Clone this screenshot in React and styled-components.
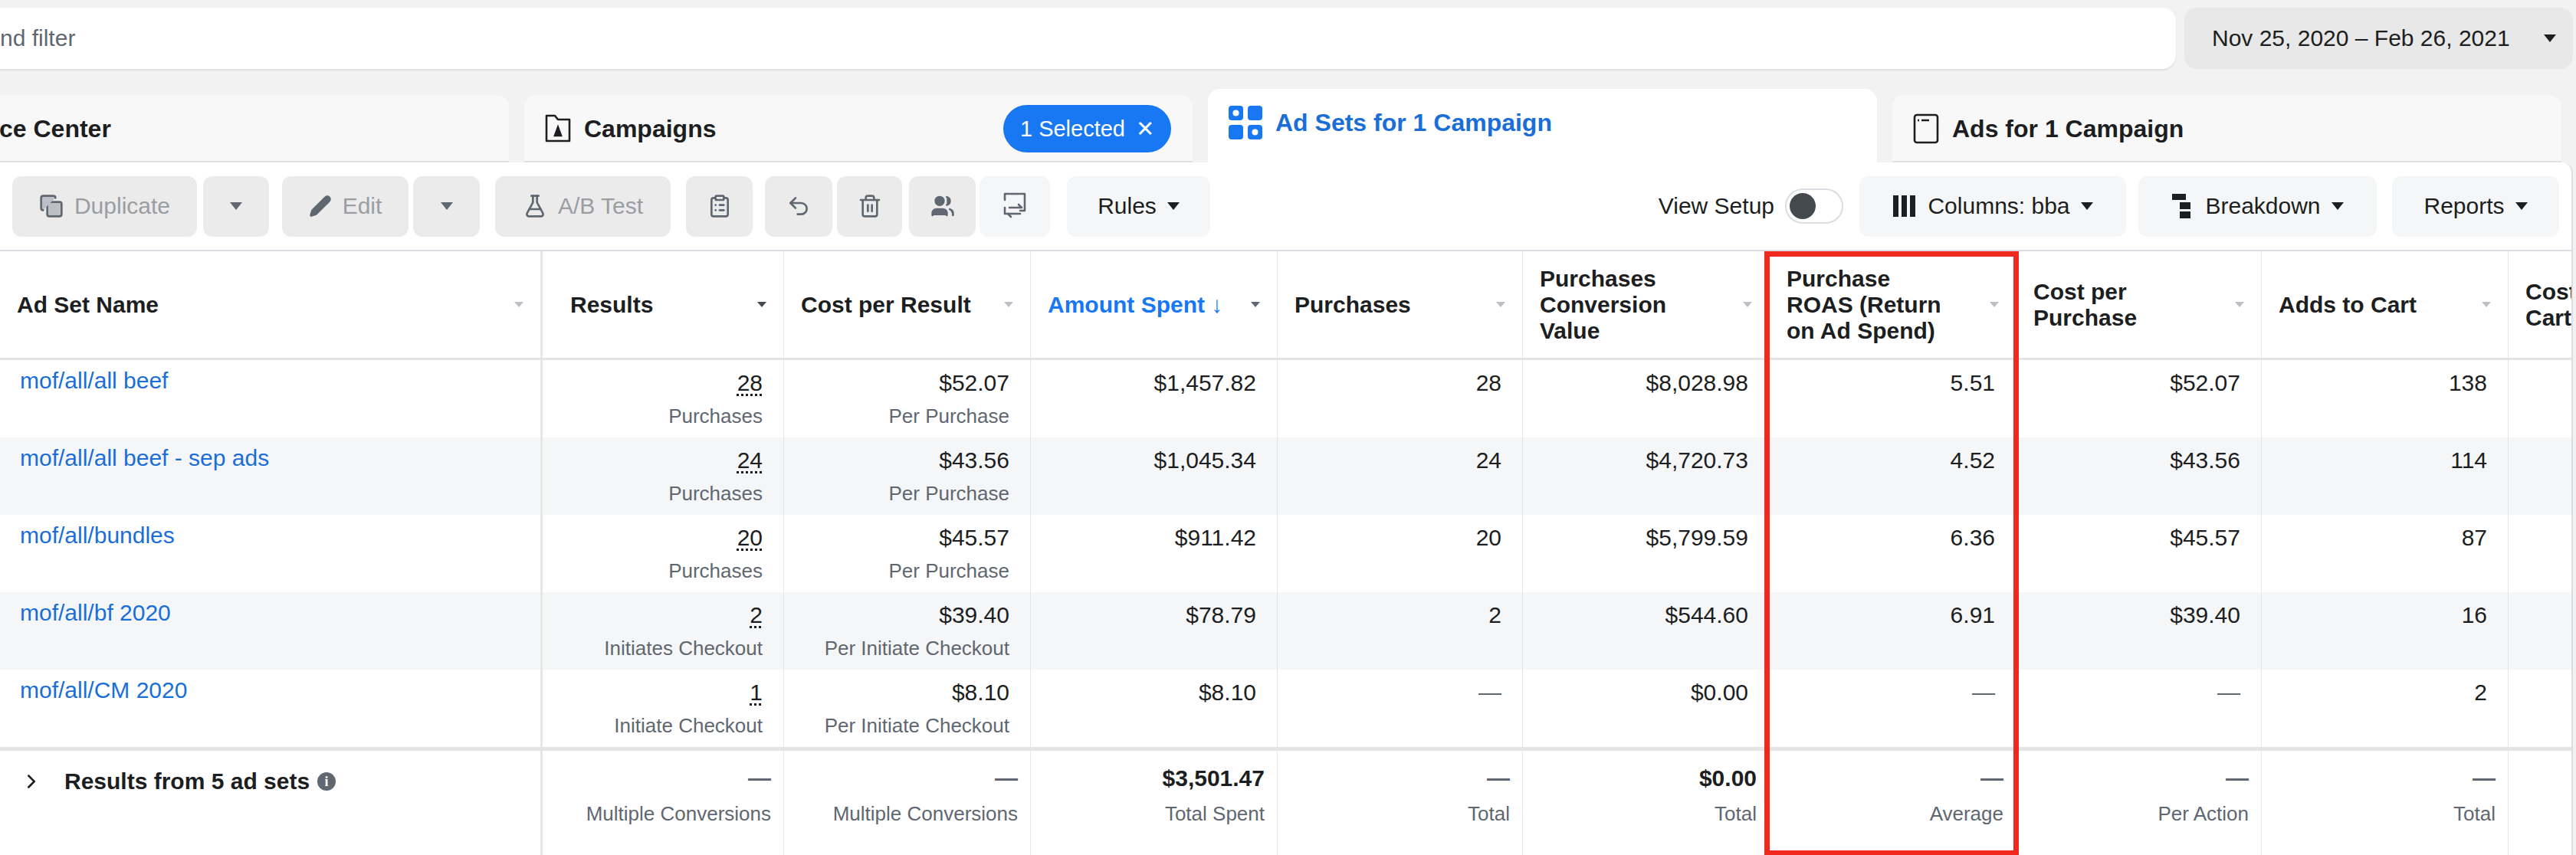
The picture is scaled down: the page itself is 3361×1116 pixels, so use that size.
import React from "react";
import styled, { createGlobalStyle } from "styled-components";
import { Copy, Pencil, FlaskConical, ClipboardList, Undo2, Trash2, Users, ChevronRight } from "lucide-react";

const Global = createGlobalStyle`
  html, body { margin: 0; padding: 0; background: #f2f2f2; }
  body { font-family: "Liberation Sans", Arial, sans-serif; color: #1c1e21; overflow: hidden; width: 3361px; height: 1116px; }
`;

const COLS = "705px 317px 322px 322px 320px 322px 322px 320px 322px 300px";

const Page = styled.div`
  width: 3361px;
  height: 1116px;
  overflow: hidden;
`;
const SearchRow = styled.div`
  display: flex;
  gap: 11px;
  padding-top: 10px;
  height: 80px;
`;
const Search = styled.div`
  width: 2839px;
  background: #fff;
  border-radius: 0 18px 18px 0;
  box-shadow: 0 2px 2px rgba(0,0,0,0.08);
  display: flex;
  align-items: center;
  font-size: 30px;
  color: #606770;
`;
const DateBtn = styled.div`
  width: 507px;
  background: #e8e8e8;
  border-radius: 16px;
  display: flex;
  align-items: center;
  justify-content: space-between;
  padding: 0 22px 0 36px;
  box-sizing: border-box;
  font-size: 30px;
  color: #1c1e21;
`;
const Caret = styled.span`
  display: inline-block;
  flex: none;
  width: 0; height: 0;
  border-left: ${p => p.$s || 8}px solid transparent;
  border-right: ${p => p.$s || 8}px solid transparent;
  border-top: ${p => (p.$s || 8) * 1.3}px solid ${p => p.$c || "#1c1e21"};
`;
const Tabs = styled.div`
  display: flex;
  align-items: flex-end;
  gap: 20px;
  margin-top: 26px;
  height: 96px;
`;
const Tab = styled.div`
  width: ${p => p.$w}px;
  height: ${p => (p.$active ? 96 : 88)}px;
  background: ${p => (p.$active ? "#fff" : "#f8f8f8")};
  border-radius: ${p => (p.$first ? "0 16px 0 0" : "16px 16px 0 0")};
  box-shadow: ${p => (p.$active ? "none" : "inset 0 -2px 0 #e0e0e0")};
  display: flex;
  align-items: center;
  gap: 16px;
  padding: ${p => (p.$first ? "0" : "0 28px 0 26px")};
  padding-bottom: ${p => (p.$active ? "8px" : "0")};
  box-sizing: border-box;
  font-size: 32px;
  font-weight: 700;
  color: ${p => (p.$active ? "#1a6ed8" : "#1c1e21")};
  margin-left: ${p => (p.$first ? "-1px" : "0")};
`;
const Badge = styled.div`
  margin-left: auto;
  background: #1877f2;
  color: #fff;
  font-weight: 400;
  font-size: 29px;
  height: 62px;
  padding: 0 22px;
  border-radius: 31px;
  display: flex;
  align-items: center;
  gap: 14px;
`;
const Panel = styled.div`
  background: #fff;
  width: 3357px;
  border-right: 2px solid #dadde1;
  border-radius: 0 14px 0 0;
  box-sizing: border-box;
`;
const Toolbar = styled.div`
  display: flex;
  align-items: center;
  height: 114px;
  padding: 0 16px;
  box-sizing: border-box;
`;
const Btn = styled.div`
  height: 79px;
  padding: 0 ${p => p.$px ?? 24}px;
  min-width: ${p => p.$mw || 0}px;
  box-sizing: border-box;
  background: ${p => (p.$light ? "#f5f6f7" : "#ebebeb")};
  color: ${p => (p.$dis ? "#9a9da2" : "#1c1e21")};
  border-radius: 12px;
  display: flex;
  align-items: center;
  justify-content: center;
  gap: 14px;
  font-size: 30px;
  margin-left: ${p => p.$ml || 0}px;
`;
const Spacer = styled.div` flex: 1; `;
const ViewSetup = styled.div`
  display: flex;
  align-items: center;
  gap: 14px;
  font-size: 30px;
  margin-right: 21px;
`;
const Toggle = styled.div`
  width: 76px; height: 46px;
  border: 2px solid #dadde1;
  border-radius: 23px;
  box-sizing: border-box;
  position: relative;
  &::after {
    content: ""; position: absolute; left: 4px; top: 4px;
    width: 34px; height: 34px; border-radius: 50%; background: #444950;
  }
`;
const TableWrap = styled.div`
  position: relative;
  border-top: 2px solid #dadde1;
  overflow: hidden;
`;
const Grid = styled.div`
  display: grid;
  grid-template-columns: ${COLS};
  grid-template-rows: ${p => p.$h}px;
  height: ${p => p.$h}px;
  background: ${p => p.$bg || "#fff"};
  border-bottom: ${p => p.$bb || 0}px solid #e4e4e4;
  border-top: ${p => p.$bt || 0}px solid #e4e4e4;
`;
const HeadCell = styled.div`
  display: flex;
  align-items: center;
  gap: 8px;
  padding: 0 22px 0 ${p => p.$pl || 22}px;
  border-left: ${p => (p.$shadow ? "3px solid #e6e6e6" : "1px solid #e6e6e6")};
  font-size: 30px;
  font-weight: 700;
  line-height: 34px;
  color: ${p => (p.$active ? "#1877f2" : "#1c1e21")};
  &:first-child { border-left: 0; }
`;
const HeadText = styled.div`
  flex: 1;
  white-space: pre;
`;
const Cell = styled.div`
  border-left: ${p => (p.$shadow ? "3px solid #e6e6e6" : "1px solid #e6e6e6")};
  padding: ${p => p.$pt ?? 13}px ${p => p.$pr ?? 27}px 0 22px;
  text-align: right;
  &:first-child { border-left: 0; text-align: left; }
`;
const Value = styled.div`
  font-size: 30px;
  line-height: 34px;
  font-weight: ${p => (p.$bold ? 700 : 400)};
  color: ${p => (p.$dash ? "#606770" : "#1c1e21")};
  & > u { text-decoration: underline dotted; text-underline-offset: 4px; }
`;
const Sub = styled.div`
  font-size: 26px;
  line-height: 30px;
  color: #606770;
  margin-top: ${p => p.$mt ?? 11}px;
`;
const Link = styled.div`
  font-size: 30px;
  line-height: 34px;
  color: #1a6ed8;
  padding-left: 4px;
`;
const SumName = styled.div`
  display: flex;
  align-items: center;
  gap: 10px;
  font-size: 30px;
  font-weight: 700;
  line-height: 34px;
  padding-top: 7px;
`;
const Info = styled.span`
  width: 24px; height: 24px; border-radius: 50%;
  background: #606770; color: #fff;
  font-size: 18px; font-weight: 700;
  display: inline-flex; align-items: center; justify-content: center;
  font-family: "Liberation Serif", serif;
`;
const Highlight = styled.div`
  position: absolute;
  left: 2302px;
  top: 0;
  width: 332px;
  height: 789px;
  border: 7px solid #f0281e;
  box-sizing: border-box;
  pointer-events: none;
`;

const AdSetIcon = () => (
  <svg width="46" height="46" viewBox="0 0 46 46">
    <rect x="1" y="1" width="19" height="19" rx="4" fill="#1877f2" />
    <rect x="26" y="1" width="19" height="19" rx="4" fill="#1877f2" />
    <rect x="1" y="26" width="19" height="19" rx="4" fill="#1877f2" />
    <rect x="26" y="26" width="19" height="19" rx="4" fill="#1877f2" />
    <circle cx="10.5" cy="10.5" r="4" fill="#fff" />
    <circle cx="35.5" cy="35.5" r="4" fill="#fff" />
  </svg>
);
const FolderIcon = () => (
  <svg width="36" height="42" viewBox="0 0 36 42" fill="none" stroke="#1c1e21" strokeWidth="2.6">
    <path d="M3 4h11l4 5h15v28H3z" strokeLinejoin="round" />
    <path d="M14 30l4-11 4 11z" fill="#1c1e21" />
  </svg>
);
const AdsIcon = () => (
  <svg width="36" height="42" viewBox="0 0 36 42" fill="none" stroke="#1c1e21" strokeWidth="2.6">
    <rect x="3" y="3" width="30" height="36" rx="3" />
    <path d="M7 10h2M12 10h10" />
  </svg>
);
const ColumnsIcon = () => (
  <svg width="32" height="32" viewBox="0 0 32 32" fill="#1c1e21">
    <rect x="1" y="2" width="7" height="28" />
    <rect x="12" y="2" width="7" height="28" />
    <rect x="23" y="2" width="7" height="28" />
  </svg>
);
const BreakdownIcon = () => (
  <svg width="30" height="34" viewBox="0 0 30 34" fill="#1c1e21">
    <rect x="1" y="1" width="18" height="8" />
    <rect x="11" y="12" width="14" height="9" />
    <rect x="11" y="24" width="14" height="9" />
  </svg>
);
const SwapIcon = () => (
  <svg width="34" height="40" viewBox="0 0 34 40" fill="none" stroke="#606770" strokeWidth="2.6" strokeLinecap="round" strokeLinejoin="round">
    <path d="M4 12V4h26v22h-6M10 30H4v-8" />
    <path d="M10 22h16l-4-4M24 30H8l4 4" />
  </svg>
);

const headers = [
  { t: "Ad Set Name", c: "#bcc0c4" },
  { t: "Results", c: "#444950", pl: 36, shadow: true },
  { t: "Cost per Result", c: "#bcc0c4" },
  { t: "Amount Spent ↓", c: "#606770", active: true },
  { t: "Purchases", c: "#bcc0c4" },
  { t: "Purchases\nConversion\nValue", c: "#bcc0c4" },
  { t: "Purchase\nROAS (Return\non Ad Spend)", c: "#bcc0c4" },
  { t: "Cost per\nPurchase", c: "#bcc0c4" },
  { t: "Adds to Cart", c: "#bcc0c4" },
  { t: "Cost per Adds to\nCart", c: "#bcc0c4" },
];

const rows = [
  ["mof/all/all beef", "28", "Purchases", "$52.07", "Per Purchase", "$1,457.82", "28", "$8,028.98", "5.51", "$52.07", "138"],
  ["mof/all/all beef - sep ads", "24", "Purchases", "$43.56", "Per Purchase", "$1,045.34", "24", "$4,720.73", "4.52", "$43.56", "114"],
  ["mof/all/bundles", "20", "Purchases", "$45.57", "Per Purchase", "$911.42", "20", "$5,799.59", "6.36", "$45.57", "87"],
  ["mof/all/bf 2020", "2", "Initiates Checkout", "$39.40", "Per Initiate Checkout", "$78.79", "2", "$544.60", "6.91", "$39.40", "16"],
  ["mof/all/CM 2020", "1", "Initiate Checkout", "$8.10", "Per Initiate Checkout", "$8.10", "—", "$0.00", "—", "—", "2"],
];

const V = ({ v }) => <Value $dash={v === "—"}>{v}</Value>;

const summary = [
  ["—", "Multiple Conversions"], ["—", "Multiple Conversions"], ["$3,501.47", "Total Spent"],
  ["—", "Total"], ["$0.00", "Total"], ["—", "Average"], ["—", "Per Action"], ["—", "Total"],
];

export default function App() {
  return (
    <Page>
      <Global />
      <SearchRow>
        <Search>nd filter</Search>
        <DateBtn>Nov 25, 2020 – Feb 26, 2021 <Caret $s={8} /></DateBtn>
      </SearchRow>
      <Tabs>
        <Tab $w={665} $first>ce Center</Tab>
        <Tab $w={872}><FolderIcon />Campaigns<Badge>1 Selected <span>✕</span></Badge></Tab>
        <Tab $w={873} $active><AdSetIcon />Ad Sets for 1 Campaign</Tab>
        <Tab $w={873}><AdsIcon />Ads for 1 Campaign</Tab>
      </Tabs>
      <Panel>
        <Toolbar>
          <Btn $dis $mw={241}><Copy size={32} color="#606770" fill="#bcc0c4" />Duplicate</Btn>
          <Btn $ml={8} $mw={86}><Caret $s={8} $c="#606770" /></Btn>
          <Btn $dis $ml={17} $mw={165}><Pencil size={30} color="#606770" fill="#606770" />Edit</Btn>
          <Btn $ml={6} $mw={87}><Caret $s={8} $c="#606770" /></Btn>
          <Btn $dis $ml={20} $mw={229}><FlaskConical size={32} color="#606770" />A/B Test</Btn>
          <Btn $ml={20} $mw={87} $px={0}><ClipboardList size={32} color="#606770" /></Btn>
          <Btn $ml={16} $mw={88} $px={0}><Undo2 size={32} color="#606770" /></Btn>
          <Btn $ml={6} $mw={85} $px={0}><Trash2 size={32} color="#606770" /></Btn>
          <Btn $ml={9} $mw={87} $px={0}><Users size={32} color="#606770" fill="#606770" /></Btn>
          <Btn $ml={5} $mw={92} $px={0} $light><SwapIcon /></Btn>
          <Btn $ml={22} $mw={187} $light>Rules <Caret $s={8} /></Btn>
          <Spacer />
          <ViewSetup>View Setup <Toggle /></ViewSetup>
          <Btn $mw={348} $light><ColumnsIcon />Columns: bba <Caret $s={8} /></Btn>
          <Btn $ml={16} $mw={311} $light><BreakdownIcon />Breakdown <Caret $s={8} /></Btn>
          <Btn $ml={20} $mw={218} $light>Reports <Caret $s={8} /></Btn>
        </Toolbar>
        <TableWrap>
          <Grid $h={139} $bb={3}>
            {headers.map((h, i) => (
              <HeadCell key={i} $pl={h.pl} $shadow={h.shadow} $active={h.active}>
                <HeadText>{h.t}</HeadText>
                <Caret $s={6} $c={h.c} />
              </HeadCell>
            ))}
          </Grid>
          {rows.map((r, i) => (
            <Grid key={i} $h={101} $bg={i % 2 ? "#f5f6f7" : "#fff"}>
              <Cell $pt={10}><Link>{r[0]}</Link></Cell>
              <Cell $shadow><Value><u>{r[1]}</u></Value><Sub>{r[2]}</Sub></Cell>
              <Cell><V v={r[3]} /><Sub>{r[4]}</Sub></Cell>
              <Cell><V v={r[5]} /></Cell>
              <Cell><V v={r[6]} /></Cell>
              <Cell><V v={r[7]} /></Cell>
              <Cell><V v={r[8]} /></Cell>
              <Cell><V v={r[9]} /></Cell>
              <Cell><V v={r[10]} /></Cell>
              <Cell />
            </Grid>
          ))}
          <Grid $h={145} $bt={5}>
            <Cell $pt={16}>
              <SumName><ChevronRight size={30} color="#1c1e21" style={{ marginLeft: 4, marginRight: 18 }} />Results from 5 ad sets <Info>i</Info></SumName>
            </Cell>
            {summary.map((s, i) => (
              <Cell key={i} $pt={19} $pr={16} $shadow={i === 0}>
                <Value $bold $dash={s[0] === "—"}>{s[0]}</Value>
                <Sub $mt={14}>{s[1]}</Sub>
              </Cell>
            ))}
            <Cell />
          </Grid>
          <Highlight />
        </TableWrap>
      </Panel>
    </Page>
  );
}
